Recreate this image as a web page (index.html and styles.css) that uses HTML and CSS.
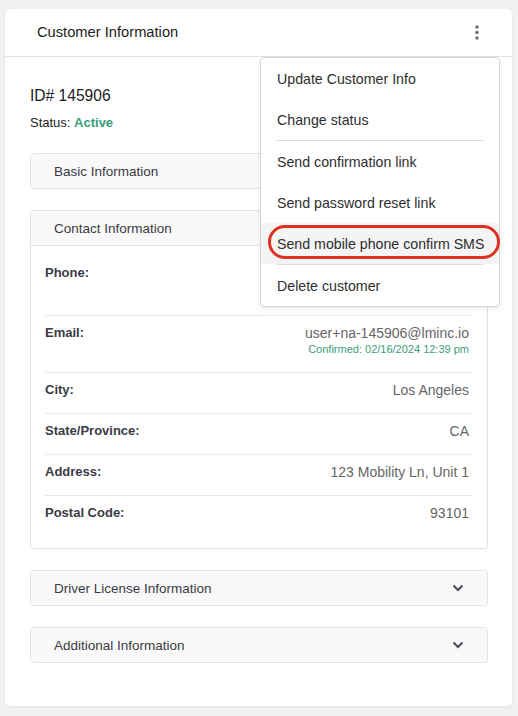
FILE: index.html
```html
<!DOCTYPE html>
<html>
<head>
<meta charset="utf-8">
<link rel="stylesheet" href="styles.css">
</head>
<body>
<div class="card">
  <div class="card-header">
    <span class="card-title">Customer Information</span>
    <svg class="kebab" width="8" height="18" viewBox="0 0 8 18"><circle cx="4" cy="3" r="1.8"/><circle cx="4" cy="8.5" r="1.8"/><circle cx="4" cy="14" r="1.8"/></svg>
  </div>
  <div class="card-body">
    <div class="cust-id">ID# 145906</div>
    <div class="status">Status: <b>Active</b></div>

    <div class="panel">
      <div class="panel-head">Basic Information</div>
    </div>

    <div class="panel">
      <div class="panel-head">Contact Information</div>
      <div class="panel-body">
        <div class="row row-phone"><span class="label">Phone:</span><span class="value"></span></div>
        <div class="row"><span class="label">Email:</span><span class="value">user+na-145906@lminc.io<span class="confirmed">Confirmed: 02/16/2024 12:39 pm</span></span></div>
        <div class="row"><span class="label">City:</span><span class="value">Los Angeles</span></div>
        <div class="row"><span class="label">State/Province:</span><span class="value">CA</span></div>
        <div class="row"><span class="label">Address:</span><span class="value">123 Mobility Ln, Unit 1</span></div>
        <div class="row"><span class="label">Postal Code:</span><span class="value">93101</span></div>
      </div>
    </div>

    <div class="panel">
      <div class="panel-head">Driver License Information<svg class="chev" width="12" height="8" viewBox="0 0 12 8"><path d="M1.5 1.5 L6 6 L10.5 1.5"/></svg></div>
    </div>

    <div class="panel">
      <div class="panel-head">Additional Information<svg class="chev" width="12" height="8" viewBox="0 0 12 8"><path d="M1.5 1.5 L6 6 L10.5 1.5"/></svg></div>
    </div>
  </div>

  <div class="menu">
    <div class="menu-item">Update Customer Info</div>
    <div class="menu-item">Change status</div>
    <div class="menu-sep"></div>
    <div class="menu-item">Send confirmation link</div>
    <div class="menu-item">Send password reset link</div>
    <div class="menu-item active">Send mobile phone confirm SMS<span class="ring"></span></div>
    <div class="menu-sep"></div>
    <div class="menu-item">Delete customer</div>
  </div>
</div>
</body>
</html>
```

FILE: styles.css
```css
* { box-sizing: border-box; }
html, body { margin: 0; padding: 0; }
body {
  background: #f1f1f3;
  font-family: "Liberation Sans", Arial, sans-serif;
  color: #2a2a2a;
  width: 518px;
  height: 716px;
  overflow: hidden;
}
.card {
  position: relative;
  margin: 9px 0 0 5px;
  width: 507px;
  height: 697px;
  background: #fff;
  border-radius: 5px;
  box-shadow: 0 1px 3px rgba(0,0,0,0.08);
}
.card-header {
  height: 48px;
  border-bottom: 1px solid #e3e3e5;
  display: flex;
  align-items: center;
  justify-content: space-between;
  padding: 0 31px 0 32px;
}
.card-title { font-size: 14.7px; color: #222; margin-top: -1px; }
.kebab { fill: #707070; }
.card-body { padding: 29px 24px 0 25px; }
.cust-id { font-size: 15.6px; line-height: 20px; color: #222; }
.status { font-size: 13px; line-height: 16px; margin-top: 9px; color: #222; }
.status b { color: #3a9e7c; }
.panel {
  margin-top: 21px;
  border: 1px solid #e4e4e6;
  border-radius: 3px;
  overflow: hidden;
}
.status + .panel { margin-top: 22px; }
.panel-head {
  height: 34px;
  background: #f9f9f9;
  display: flex;
  align-items: center;
  justify-content: space-between;
  padding: 0 23px 0 23px;
  font-size: 13.5px;
  color: #3a3a44;
}
.panel-body {
  border-top: 1px solid #e4e4e6;
  padding: 10px 14px 12px 14px;
}
.row {
  display: flex;
  justify-content: space-between;
  align-items: flex-start;
  padding: 9px 0 15px;
  border-top: 1px solid #e8e8ea;
  font-size: 13px;
  line-height: 16px;
}
.row:first-child { border-top: none; }
.row-phone { min-height: 59px; }
.label { font-weight: bold; color: #3b3b45; }
.value {
  text-align: right;
  color: #666;
  font-size: 14px;
  padding-right: 4px;
  display: flex;
  flex-direction: column;
  align-items: flex-end;
}
.confirmed {
  font-size: 11px;
  line-height: 16px;
  color: #3a9e7c;
}
.chev { fill: none; stroke: #4b4b58; stroke-width: 2; }

.menu {
  position: absolute;
  left: 255px;
  top: 48px;
  width: 240px;
  background: #fff;
  border: 1px solid #d6d6d8;
  border-radius: 4px;
  box-shadow: 0 2px 6px rgba(0,0,0,0.08);
  padding: 0;
}
.menu-item {
  position: relative;
  height: 41px;
  display: flex;
  align-items: center;
  padding-left: 16px;
  font-size: 14.2px;
  color: #2e2e2e;
  white-space: nowrap;
}
.menu-item.active { background: #f4f4f5; }
.menu-sep {
  height: 1px;
  margin: 0 16px;
  background: #dcdcde;
}
.ring {
  position: absolute;
  left: 7px;
  top: 2px;
  width: 232px;
  height: 34px;
  border: 3px solid #dc3220;
  border-radius: 17px;
}
```
